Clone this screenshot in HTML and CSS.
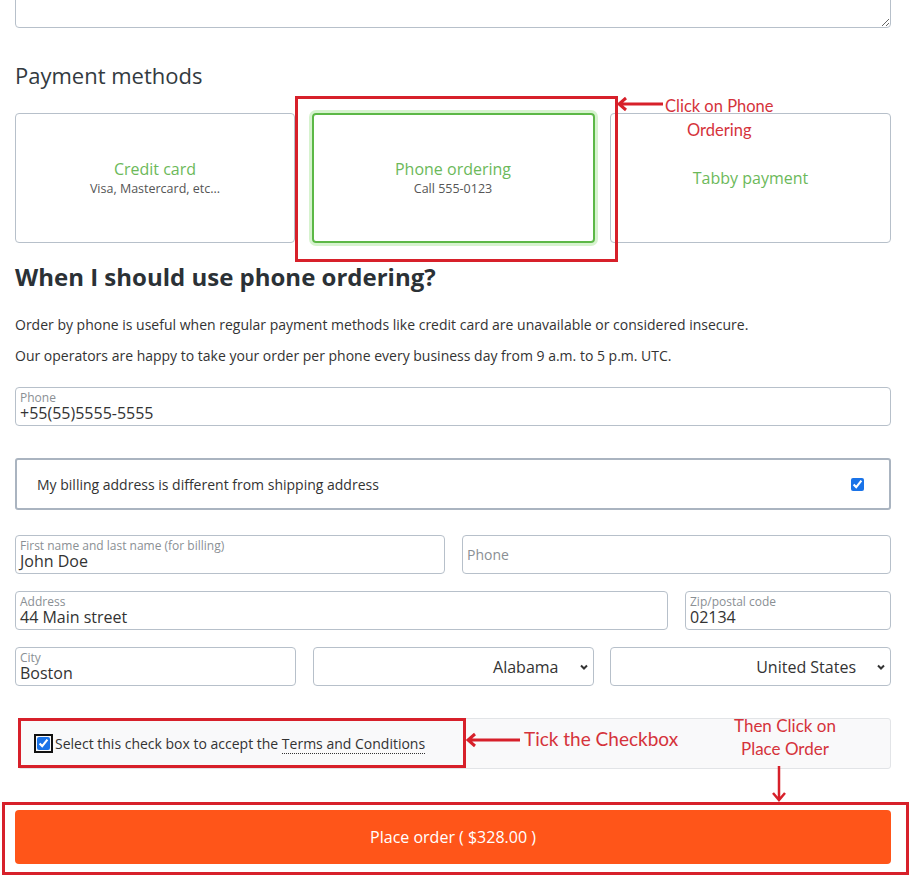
FILE: index.html
```html
<!DOCTYPE html>
<html lang="en">
<head>
<meta charset="utf-8">
<title>Checkout</title>
<link rel="stylesheet" href="styles.css">
</head>
<body>
<div class="page">
  <textarea class="notes"></textarea>

  <h3 class="pm-title">Payment methods</h3>
  <div class="methods">
    <div class="method">
      <div class="m-name">Credit card</div>
      <div class="m-sub">Visa, Mastercard, etc...</div>
    </div>
    <div class="method selected">
      <div class="m-name">Phone ordering</div>
      <div class="m-sub">Call 555-0123</div>
    </div>
    <div class="method">
      <div class="m-name">Tabby payment</div>
    </div>
  </div>

  <h2 class="info-title">When I should use phone ordering?</h2>
  <p class="info">Order by phone is useful when regular payment methods like credit card are unavailable or considered insecure.</p>
  <p class="info">Our operators are happy to take your order per phone every business day from 9 a.m. to 5 p.m. UTC.</p>

  <div class="field full">
    <span class="f-label">Phone</span>
    <span class="f-value">+55(55)5555-5555</span>
  </div>

  <label class="billing">
    <span>My billing address is different from shipping address</span>
    <input type="checkbox" checked>
  </label>

  <div class="row two">
    <div class="field"><span class="f-label">First name and last name (for billing)</span><span class="f-value">John Doe</span></div>
    <div class="field placeholder"><span class="f-ph">Phone</span></div>
  </div>
  <div class="row addr">
    <div class="field"><span class="f-label">Address</span><span class="f-value">44 Main street</span></div>
    <div class="field"><span class="f-label">Zip/postal code</span><span class="f-value">02134</span></div>
  </div>
  <div class="row three">
    <div class="field"><span class="f-label">City</span><span class="f-value">Boston</span></div>
    <div class="field select"><span class="s-value">Alabama</span><svg class="chev" width="10" height="8" viewBox="0 0 10 8"><path d="M2 2.5 L5 5.5 L8 2.5" fill="none" stroke="#333" stroke-width="2"/></svg></div>
    <div class="field select"><span class="s-value">United States</span><svg class="chev" width="10" height="8" viewBox="0 0 10 8"><path d="M2 2.5 L5 5.5 L8 2.5" fill="none" stroke="#333" stroke-width="2"/></svg></div>
  </div>

  <div class="terms">
    <input type="checkbox" class="t-check" checked>
    <span>Select this check box to accept the <a class="t-link">Terms and Conditions</a></span>
  </div>

  <button class="order">Place order ( $328.00 )</button>
</div>

<!-- annotations -->
<div class="ann-box box1"></div>
<div class="ann-arrow-h arrow1"><svg width="46" height="16" viewBox="0 0 46 16"><path d="M2 8 H46 M9 2 L2 8 L9 14" fill="none" stroke="#d7202a" stroke-width="3"/></svg></div>
<div class="ann-text t1">Click on Phone<br>Ordering</div>

<div class="ann-box box2"></div>
<div class="ann-arrow-h arrow2"><svg width="54" height="16" viewBox="0 0 54 16"><path d="M2 8 H54 M9 2 L2 8 L9 14" fill="none" stroke="#d7202a" stroke-width="3"/></svg></div>
<div class="ann-text t2">Tick the Checkbox</div>

<div class="ann-text t3">Then Click on<br>Place Order</div>
<div class="ann-arrow-v arrow3"><svg width="16" height="36" viewBox="0 0 16 36"><path d="M8 0 V34 M2 27 L8 34 L14 27" fill="none" stroke="#d7202a" stroke-width="2.5"/></svg></div>

<div class="ann-box box3"></div>
</body>
</html>
```

FILE: styles.css
```css
* { box-sizing: border-box; }
html, body { margin: 0; padding: 0; background: #fff; }
body {
  font-family: "Open Sans", "Noto Sans", sans-serif;
  color: #333;
  width: 924px;
  height: 880px;
  overflow: hidden;
  position: relative;
}
.page {
  width: 876px;
  margin-left: 15px;
  display: flex;
  flex-direction: column;
}
.notes {
  display: block;
  width: 876px;
  height: 68px;
  margin-top: -40px;
  border: 1px solid #b7c0ca;
  border-radius: 4px;
  resize: vertical;
}
.pm-title {
  margin: 32px 0 0;
  font-size: 22px;
  font-weight: 400;
  line-height: 30px;
  color: #333a40;
}
.methods {
  margin-top: 23px;
  display: grid;
  grid-template-columns: 280px 284px 281px;
  gap: 15.5px;
}
.method {
  height: 130px;
  border: 1px solid #b7c0ca;
  border-radius: 4px;
  display: flex;
  flex-direction: column;
  align-items: center;
  justify-content: center;
  text-align: center;
}
.method.selected {
  border: 2px solid #5cb846;
  box-shadow: 0 0 0 3px #d6f3ce;
  margin: 0 0 0 1px;
}
.m-name {
  font-size: 16px;
  line-height: 22px;
  color: #6cb95a;
}
.m-sub {
  font-size: 12.5px;
  line-height: 18px;
  color: #555;
}
.info-title {
  margin: 18px 0 0;
  font-size: 24px;
  font-weight: 700;
  line-height: 32px;
  color: #2b3136;
}
.info {
  margin: 0;
  font-size: 14px;
  line-height: 20px;
  color: #333;
}
.info-title + .info { margin-top: 22px; }
.info + .info { margin-top: 11px; }

.field {
  height: 39px;
  border: 1px solid #b7c0ca;
  border-radius: 4px;
  padding: 0 0 0 4px;
  display: flex;
  flex-direction: column;
  background: #fff;
}
.field.full { margin-top: 21px; }
.f-label {
  font-size: 12px;
  line-height: 13px;
  color: #8a8f94;
  padding-top: 3px;
}
.f-value {
  font-size: 16px;
  line-height: 19px;
  color: #333;
}
.field.placeholder { justify-content: center; padding-top: 0; }
.f-ph { font-size: 14px; color: #8a8f94; }

.billing {
  margin-top: 32px;
  height: 52px;
  border: 2px solid #aab4c0;
  border-radius: 3px;
  display: flex;
  align-items: center;
  justify-content: space-between;
  padding: 0 20px 0 20px;
  font-size: 14px;
  color: #333;
}
.billing input { width: 13px; height: 13px; margin: 0 5px 0 0; accent-color: #1a73e8; }

.row { display: grid; gap: 17px; margin-top: 17px; }
.row.two { grid-template-columns: 430px 429px; margin-top: 25px; }
.row.addr { grid-template-columns: 653px 206px; }
.row.three { grid-template-columns: 281px 281px 281px; gap: 16.5px; }
.field.select {
  flex-direction: row;
  align-items: center;
  justify-content: flex-end;
  padding: 0 4px 0 0;
}
.s-value { font-size: 16px; color: #333; margin-right: 20px; }
.chev { display: block; }

.terms {
  margin: 32px 0 0 3px;
  height: 51px;
  border: 1px solid #e2e4e7;
  border-radius: 3px;
  background: #f9f9fa;
  display: flex;
  align-items: center;
  padding-left: 18px;
  font-size: 14px;
  color: #333;
}
.t-check {
  width: 13px; height: 13px;
  margin: 0 5px 0 0;
  outline: 2px solid #111;
  outline-offset: 1px;
  border-radius: 2px;
  accent-color: #1a73e8;
}
.t-link {
  color: #333;
  text-decoration: none;
  border-bottom: 1px dotted #333;
}
.order {
  margin-top: 41px;
  height: 54px;
  width: 876px;
  border: none;
  border-radius: 4px;
  background: #ff5519;
  color: #fff;
  font-family: "Open Sans", "Noto Sans", sans-serif;
  font-size: 16px;
}

/* annotations overlay */
.ann-box {
  position: absolute;
  border: 3px solid #d7202a;
}
.box1 { left: 295px; top: 96px; width: 323px; height: 166px; }
.box2 { left: 18px; top: 718px; width: 448px; height: 50px; }
.box3 { left: 2px; top: 802px; width: 907px; height: 73px; }
.ann-arrow-h, .ann-arrow-v { position: absolute; line-height: 0; }
.ann-arrow-h svg, .ann-arrow-v svg { display: block; }
.arrow1 { left: 617px; top: 96px; }
.arrow2 { left: 466px; top: 732px; }
.arrow3 { left: 771px; top: 766px; }
.ann-text {
  position: absolute;
  font-family: Lato, "Liberation Sans", sans-serif;
  color: #d5333b;
  text-align: center;
}
.t1 { left: 665px; top: 94px; font-size: 16.5px; line-height: 24px; }
.t2 { left: 524px; top: 727px; font-size: 19px; line-height: 24px; }
.t3 { left: 734px; top: 714px; font-size: 17px; line-height: 23px; }
```
